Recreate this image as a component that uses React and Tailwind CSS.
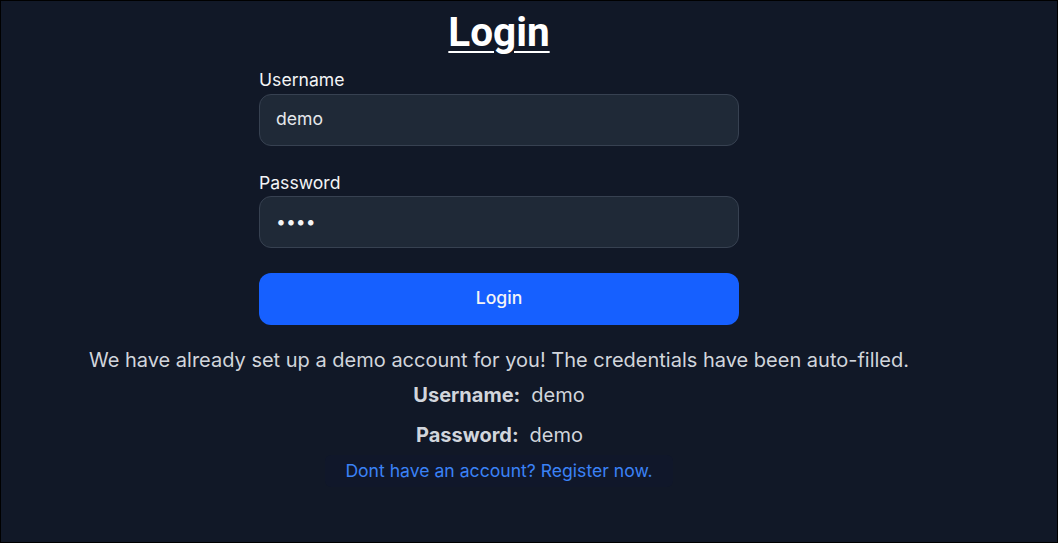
const Login = () => {
  return (
    <div className="min-h-screen bg-[#111827] border border-black font-['Inter',sans-serif] text-gray-100">
      <div className="flex flex-col items-center pr-[60px] pt-[11px]">
        <h1 className="font-['Roboto',sans-serif] text-[40.5px] leading-10 font-bold text-white underline underline-offset-[5px] decoration-[2px]">
          Login
        </h1>
        <form className="w-[480px] mt-4" onSubmit={(e) => e.preventDefault()}>
          <label className="block text-[17.6px] leading-6 text-gray-100 mb-0.5">Username</label>
          <input
            type="text"
            defaultValue="demo"
            className="w-full h-[52px] px-4 pb-1 rounded-xl bg-[#1f2937] border border-[#374151] text-[17.6px] text-gray-200 outline-none"
          />
          <label className="block text-[17.6px] leading-6 text-gray-100 mt-[25px] mb-px">Password</label>
          <input
            type="password"
            defaultValue="demo"
            className="w-full h-[52px] px-4 pb-0.5 rounded-xl bg-[#1f2937] border border-[#374151] text-[17.6px] text-gray-100 outline-none"
          />
          <button className="w-full h-[52px] mt-[25px] pb-0.5 rounded-xl bg-[#1660ff] text-[17.6px] font-medium text-gray-100">
            Login
          </button>
        </form>
        <p className="mt-[21px] text-xl leading-7 text-gray-300">
          We have already set up a demo account for you! The credentials have been auto-filled.
        </p>
        <div className="mt-[7px] flex flex-col gap-3 text-xl leading-7 text-gray-300">
          <div className="flex justify-center gap-[11px]">
            <span className="font-bold">Username:</span>
            <span>demo</span>
          </div>
          <div className="flex justify-center gap-[11px] pl-px">
            <span className="font-bold">Password:</span>
            <span>demo</span>
          </div>
        </div>
        <a href="#" className="mt-1.5 px-5 py-1 rounded-md bg-[#10172a] text-[17.6px] leading-6 text-[#3b82f6]">
          Dont have an account? Register now.
        </a>
      </div>
    </div>
  );
};

export default Login;
